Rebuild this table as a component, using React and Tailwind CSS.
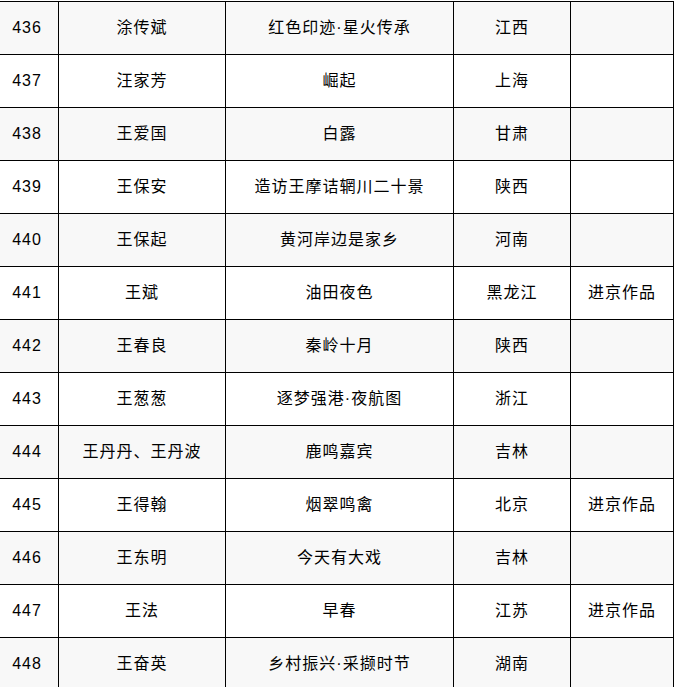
const rows = [
  ["436", "涂传斌", "红色印迹·星火传承", "江西", ""],
  ["437", "汪家芳", "崛起", "上海", ""],
  ["438", "王爱国", "白露", "甘肃", ""],
  ["439", "王保安", "造访王摩诘辋川二十景", "陕西", ""],
  ["440", "王保起", "黄河岸边是家乡", "河南", ""],
  ["441", "王斌", "油田夜色", "黑龙江", "进京作品"],
  ["442", "王春良", "秦岭十月", "陕西", ""],
  ["443", "王葱葱", "逐梦强港·夜航图", "浙江", ""],
  ["444", "王丹丹、王丹波", "鹿鸣嘉宾", "吉林", ""],
  ["445", "王得翰", "烟翠鸣禽", "北京", "进京作品"],
  ["446", "王东明", "今天有大戏", "吉林", ""],
  ["447", "王法", "早春", "江苏", "进京作品"],
  ["448", "王奋英", "乡村振兴·采撷时节", "湖南", ""],
];

export default function App() {
  return (
    <div className="w-[676px] h-[687px] overflow-hidden bg-white">
      <div
        className="ml-[-5px] mt-px w-[679px] border-l border-t border-black text-black text-[16px] tracking-[1px]"
        style={{ fontFamily: '"Liberation Sans", "Noto Sans CJK SC", sans-serif' }}
      >
        {rows.map((r, i) => (
          <div
            key={r[0]}
            className={`grid grid-cols-[63px_167px_228px_117px_103px] h-[53px] border-b border-black ${i % 2 === 0 ? "bg-[#f8f8f8]" : "bg-white"}`}
          >
            {r.map((c, j) => (
              <div key={j} className="flex items-center justify-center border-r border-black">
                {c}
              </div>
            ))}
          </div>
        ))}
      </div>
    </div>
  );
}
